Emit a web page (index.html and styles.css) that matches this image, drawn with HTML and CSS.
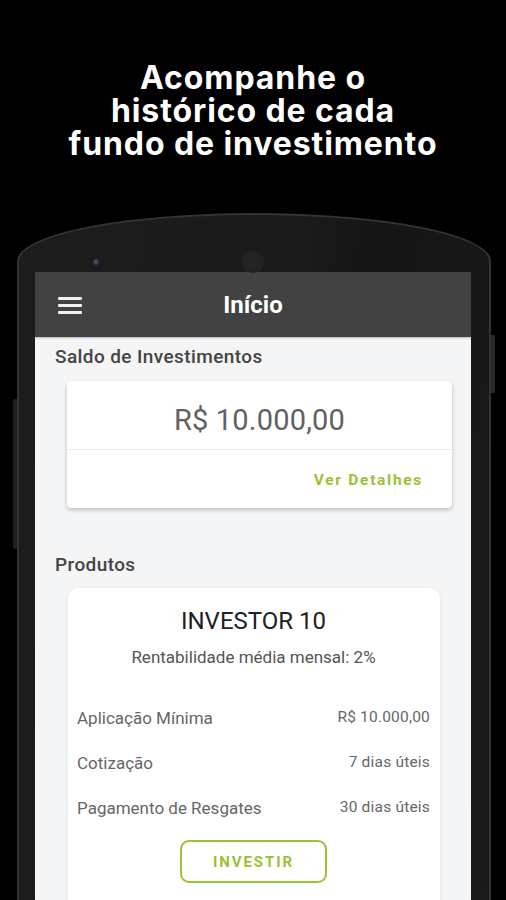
FILE: index.html
```html
<!DOCTYPE html>
<html lang="pt-BR">
<head>
<meta charset="utf-8">
<title>Acompanhe o histórico</title>
<link rel="stylesheet" href="styles.css">
</head>
<body>
  <h1 class="headline">Acompanhe o<br>histórico de cada<br>fundo de investimento</h1>

  <div class="phone">
    <span class="side-btn side-btn-right"></span>
    <span class="side-btn side-btn-left"></span>
    <span class="camera"></span>
    <span class="speaker"></span>

    <div class="screen">
      <header class="appbar">
        <span class="menu" aria-label="menu"><i></i><i></i><i></i></span>
        <span class="appbar-title">Início</span>
        <span></span>
      </header>

      <main class="content">
        <h2 class="section-label label-saldo">Saldo de Investimentos</h2>
        <section class="card balance-card">
          <div class="balance-amount">R$ 10.000,00</div>
          <div class="balance-actions">
            <span class="link-btn">Ver Detalhes</span>
          </div>
        </section>

        <h2 class="section-label label-produtos">Produtos</h2>
        <section class="card product-card">
          <div class="product-name">INVESTOR 10</div>
          <div class="product-rent">Rentabilidade média mensal: 2%</div>
          <div class="product-rows">
            <div class="row"><span class="row-label">Aplicação Mínima</span><span class="row-value">R$ 10.000,00</span></div>
            <div class="row"><span class="row-label">Cotização</span><span class="row-value">7 dias úteis</span></div>
            <div class="row"><span class="row-label">Pagamento de Resgates</span><span class="row-value">30 dias úteis</span></div>
          </div>
          <div class="product-action">
            <span class="outline-btn">INVESTIR</span>
          </div>
        </section>
      </main>
    </div>
  </div>
</body>
</html>
```

FILE: styles.css
```css
* { box-sizing: border-box; }

html, body {
  margin: 0;
  padding: 0;
}

body {
  width: 506px;
  height: 900px;
  overflow: hidden;
  background: #000;
  font-family: Roboto, "Liberation Sans", sans-serif;
}

.headline {
  margin: 0;
  padding-top: 61px;
  text-align: center;
  color: #fff;
  font-family: Inter, "Open Sans", sans-serif;
  font-weight: 700;
  font-size: 32px;
  line-height: 33px;
  letter-spacing: 0.9px;
}

.phone {
  position: relative;
  margin: 53px 0 0 17px;
  width: 474px;
  height: 700px;
  padding: 57px 18px 0 16px;
  background: linear-gradient(100deg, #1d1d1d 0%, #1a1a1a 50%, #151515 60%, #1a1a1a 100%);
  border: 2px solid #343434;
  border-bottom: none;
  border-radius: 237px 237px 0 0 / 48px 48px 0 0;
}

.side-btn {
  position: absolute;
  background: #2a2a2a;
}
.side-btn-right {
  right: -6px;
  top: 120px;
  width: 4px;
  height: 58px;
  border-radius: 0 2px 2px 0;
}
.side-btn-left {
  left: -6px;
  top: 184px;
  width: 4px;
  height: 150px;
  background: #1f1f1f;
  border-radius: 2px 0 0 2px;
}

.camera {
  position: absolute;
  left: 74px;
  top: 44px;
  width: 7px;
  height: 7px;
  border-radius: 50%;
  background: radial-gradient(circle at 40% 40%, #5a5a78 0%, #23233a 60%, #111 100%);
}

.speaker {
  position: absolute;
  left: 223px;
  top: 36px;
  width: 22px;
  height: 22px;
  border-radius: 50%;
  background: radial-gradient(circle at 50% 50%, #262626 0%, #222 70%, #1c1c1c 100%);
  box-shadow: inset 0 0 2px rgba(255,255,255,0.06);
}

.screen {
  width: 436px;
  height: 628px;
  background: #f4f5f7;
  overflow: hidden;
}

.appbar {
  height: 65px;
  background: #424242;
  display: grid;
  grid-template-columns: 1fr auto 1fr;
  align-items: center;
  padding-left: 23px;
  padding-right: 23px;
  box-shadow: 0 1px 2px rgba(0,0,0,0.25);
}

.menu {
  display: flex;
  flex-direction: column;
  gap: 4px;
  width: 24px;
  margin-top: 1px;
}
.menu i {
  display: block;
  height: 3px;
  background: #f2f2f2;
  border-radius: 1px;
}

.appbar-title {
  color: #fff;
  font-weight: 700;
  font-size: 24px;
  line-height: 28px;
}

.content {
  display: flex;
  flex-direction: column;
}

.section-label {
  margin: 0 0 0 20px;
  font-size: 19px;
  font-weight: 500;
  line-height: 22px;
  letter-spacing: 0.4px;
  color: #444;
}
.label-saldo { margin-top: 9px; }
.label-produtos { margin-top: 46px; }

.card {
  background: #fff;
}

.balance-card {
  margin: 13px 19px 0 32px;
  border-radius: 4px;
  box-shadow: 0 2px 4px rgba(0,0,0,0.22), 0 0 1px rgba(0,0,0,0.08);
}

.balance-amount {
  padding: 22px 0 12px;
  text-align: center;
  font-size: 29px;
  line-height: 34px;
  letter-spacing: 0.2px;
  color: #616161;
  border-bottom: 1px solid #ececec;
}

.balance-actions {
  display: flex;
  justify-content: flex-end;
  padding: 20px 29px 18px 0;
}

.link-btn {
  font-size: 15.5px;
  font-weight: 700;
  line-height: 20px;
  letter-spacing: 1.7px;
  color: #9bc134;
}

.product-card {
  margin: 12px 31px 0 33px;
  border-radius: 10px;
  padding: 19px 10px 40px 9px;
  box-shadow: 0 1px 4px rgba(0,0,0,0.08);
}

.product-name {
  text-align: center;
  font-size: 24px;
  line-height: 28px;
  color: #212121;
}

.product-rent {
  margin-top: 12px;
  text-align: center;
  font-size: 17px;
  line-height: 20px;
  color: #555;
}

.product-rows {
  margin-top: 41px;
  display: flex;
  flex-direction: column;
  gap: 25px;
}

.row {
  display: flex;
  justify-content: space-between;
  align-items: flex-start;
}

.row-label {
  font-size: 17px;
  line-height: 20px;
  color: #666;
}

.row-value {
  font-size: 15.5px;
  line-height: 18px;
  letter-spacing: 0.2px;
  color: #666;
}

.product-action {
  margin-top: 22px;
  display: flex;
  justify-content: center;
}

.outline-btn {
  width: 147px;
  height: 43px;
  display: flex;
  align-items: center;
  justify-content: center;
  border: 2px solid #9bc134;
  border-radius: 9px;
  font-size: 15px;
  font-weight: 700;
  letter-spacing: 1.9px;
  color: #9bc134;
}
```
